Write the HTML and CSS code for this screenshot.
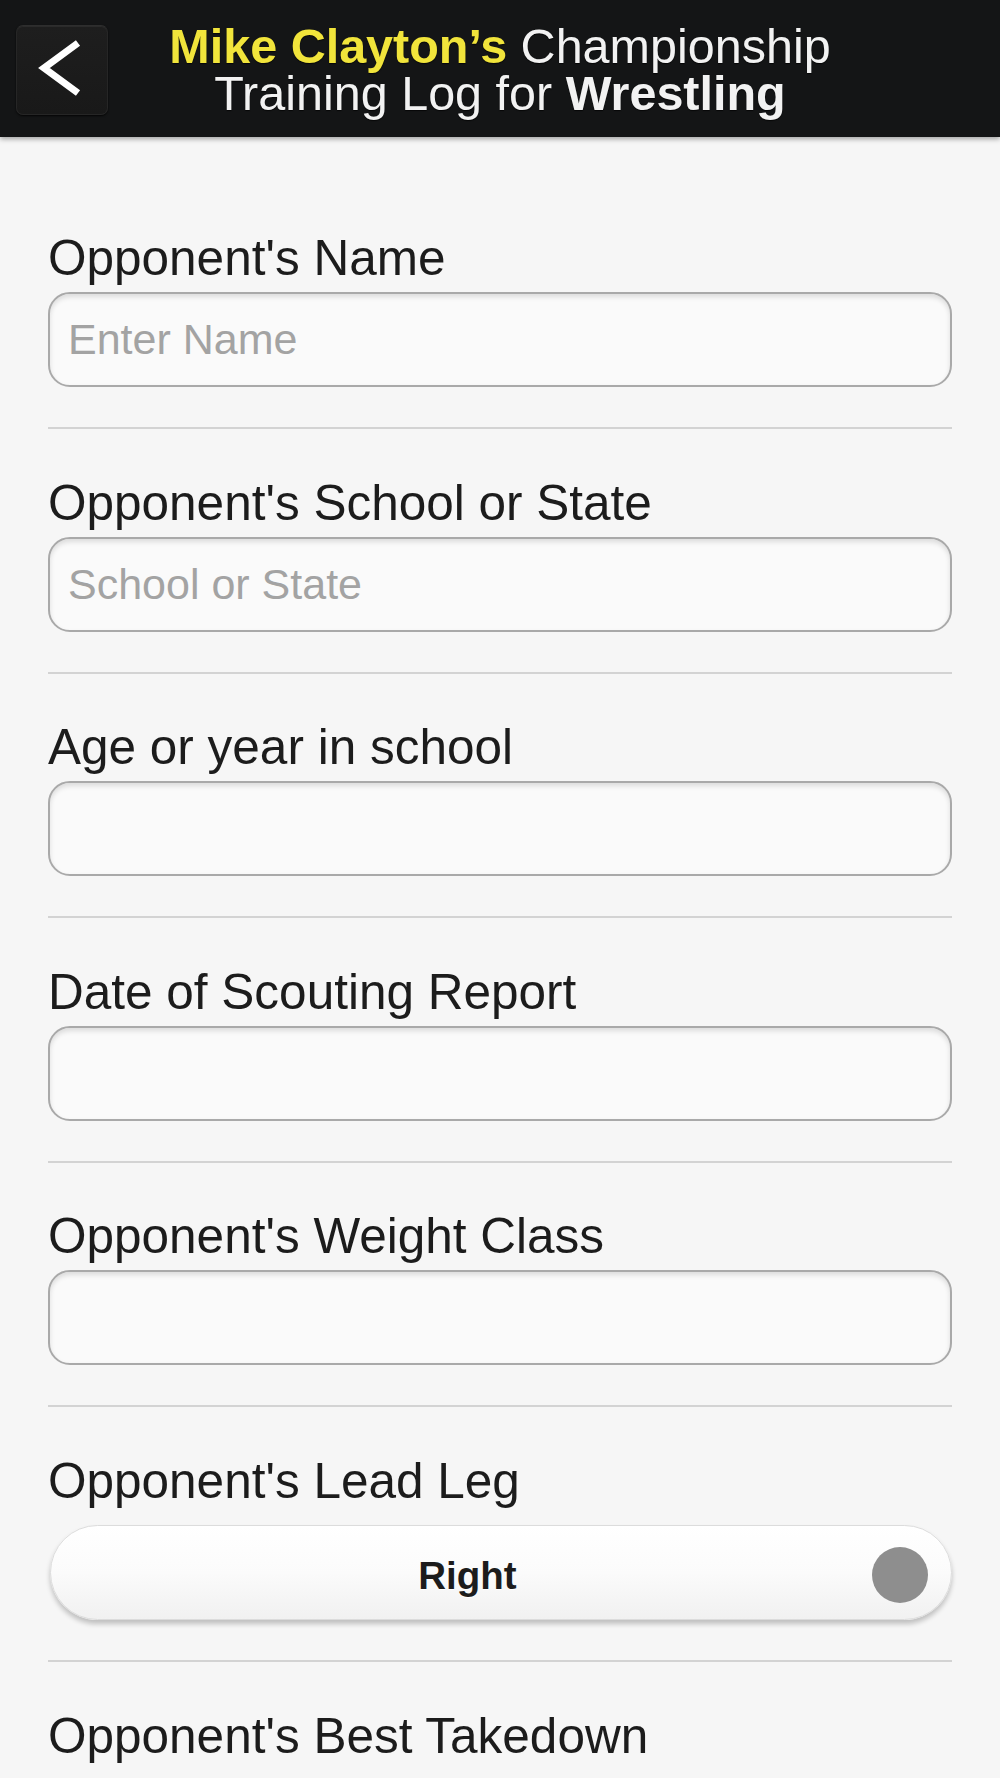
FILE: index.html
```html
<!DOCTYPE html>
<html lang="en">
<head>
<meta charset="utf-8">
<title>Scouting Report</title>
<link rel="stylesheet" href="styles.css">
</head>
<body>
<header class="topbar">
  <button class="back" type="button" aria-label="Back">
    <svg class="chev" width="92" height="90" viewBox="0 0 92 90">
      <polyline points="62,18 28,43 62,68" fill="none" stroke="#ffffff" stroke-width="7" stroke-linejoin="miter" stroke-miterlimit="10"/>
    </svg>
  </button>
  <h1 class="title">
    <span class="line"><b class="hl">Mike Clayton’s</b> Championship</span>
    <span class="line">Training Log for <b class="bold">Wrestling</b></span>
  </h1>
  <div class="spacer"></div>
</header>

<main class="form">
  <div class="field">
    <label class="label" for="f1">Opponent's Name</label>
    <input class="input" id="f1" type="text" placeholder="Enter Name">
  </div>
  <hr class="divider">
  <div class="field">
    <label class="label" for="f2">Opponent's School or State</label>
    <input class="input" id="f2" type="text" placeholder="School or State">
  </div>
  <hr class="divider">
  <div class="field">
    <label class="label" for="f3">Age or year in school</label>
    <input class="input" id="f3" type="text">
  </div>
  <hr class="divider">
  <div class="field">
    <label class="label" for="f4">Date of Scouting Report</label>
    <input class="input" id="f4" type="text">
  </div>
  <hr class="divider">
  <div class="field">
    <label class="label" for="f5">Opponent's Weight Class</label>
    <input class="input" id="f5" type="text">
  </div>
  <hr class="divider">
  <div class="field">
    <span class="label">Opponent's Lead Leg</span>
    <div class="toggle">
      <span class="toggle-text">Right</span>
      <span class="knob"></span>
    </div>
  </div>
  <hr class="divider">
  <div class="field">
    <span class="label">Opponent's Best Takedown</span>
  </div>
</main>
</body>
</html>
```

FILE: styles.css
```css
html, body {
  margin: 0;
  padding: 0;
}

body {
  background: #f6f6f6;
  font-family: "Liberation Sans", Arial, Helvetica, sans-serif;
  min-height: 100vh;
  overflow: hidden;
}

.topbar {
  display: grid;
  grid-template-columns: 108px 1fr 108px;
  align-items: start;
  height: 137px;
  box-sizing: border-box;
  background: #141516;
  box-shadow: 0 2px 5px rgba(0, 0, 0, 0.35);
  position: relative;
  z-index: 1;
}

.back {
  margin: 25px 0 0 16px;
  width: 92px;
  height: 90px;
  padding: 0;
  box-sizing: border-box;
  border: 1px solid #262626;
  border-top-color: #2e2e2e;
  border-radius: 7px;
  background: linear-gradient(#1e1e1e, #191919);
  box-shadow: 0 1px 2px rgba(0, 0, 0, 0.8), inset 0 1px 0 rgba(255, 255, 255, 0.06);
  display: flex;
  align-items: center;
  justify-content: center;
}

.chev {
  display: block;
  margin: -1px;
}

.title {
  margin: 0;
  padding-top: 23px;
  display: flex;
  flex-direction: column;
  align-items: center;
  font-size: 48.5px;
  line-height: 47px;
  font-weight: normal;
  color: #f2f2f2;
  white-space: nowrap;
  text-shadow: 0 1px 1px rgba(0, 0, 0, 0.7);
}

.line {
  display: block;
  height: 47px;
}

.hl {
  color: #f1e43b;
  font-weight: bold;
}

.bold {
  font-weight: bold;
}

.form {
  padding: 47.5px 48px 0;
}

.field {
  display: flex;
  flex-direction: column;
  padding-top: 45.5px;
}

.label {
  display: block;
  font-size: 49.5px;
  line-height: 56px;
  color: #1c1c1c;
  margin-bottom: 6px;
}

.input {
  display: block;
  width: 100%;
  height: 95px;
  box-sizing: border-box;
  margin: 0;
  padding: 0 18px;
  border: 2px solid #a9a9a9;
  border-radius: 22px;
  background: #fafafa;
  box-shadow: inset 0 3px 5px rgba(0, 0, 0, 0.12);
  font-family: "Liberation Sans", Arial, Helvetica, sans-serif;
  font-size: 43px;
  color: #222;
  outline: none;
}

.input::placeholder {
  color: #a3a3a3;
}

.divider {
  margin: 40px 0 0;
  height: 2px;
  border: 0;
  background: #d3d3d3;
}

.toggle {
  margin-top: 10.5px;
  height: 95px;
  box-sizing: border-box;
  margin-left: 2px;
  border: 1px solid #dcdcdc;
  border-radius: 48px;
  background: linear-gradient(#ffffff 0%, #fbfbfb 50%, #f1f1f1 100%);
  box-shadow: 0 4px 5px rgba(0, 0, 0, 0.22), inset 0 1px 0 #ffffff;
  display: flex;
  align-items: center;
  padding-right: 23px;
}

.toggle-text {
  flex: 1;
  text-align: center;
  padding: 6px 0 0 12px;
  font-size: 38.5px;
  font-weight: bold;
  color: #1c1c1c;
  text-shadow: 0 1px 0 #ffffff;
}

.knob {
  width: 56px;
  height: 56px;
  border-radius: 50%;
  background: #8e8e8e;
  margin-top: 4px;
}
```
